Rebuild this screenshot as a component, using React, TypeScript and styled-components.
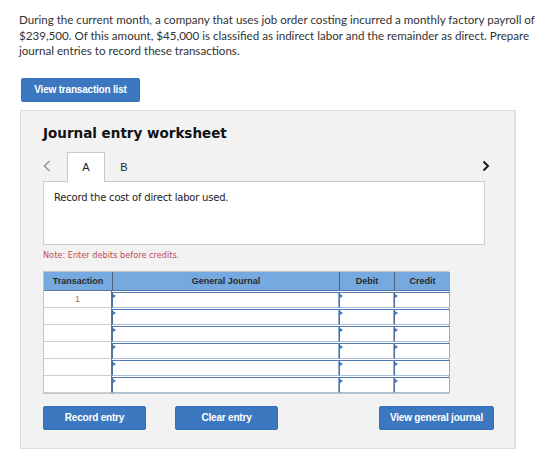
import React from "react";
import styled, { createGlobalStyle } from "styled-components";

const GlobalStyle = createGlobalStyle`
  body {
    margin: 0;
    background: #ffffff;
    font-family: "Lato", "Liberation Sans", sans-serif;
  }
`;

const Page = styled.div`
  width: 560px;
  height: 449px;
  padding: 12px 0 0 19px;
  box-sizing: border-box;
  overflow: hidden;
`;

const Intro = styled.p`
  margin: 0;
  font-size: 11.6px;
  line-height: 15.5px;
  color: #333;
  white-space: nowrap;
`;

const BlueButton = styled.button<{ $width: number }>`
  width: ${(p) => p.$width}px;
  height: 24px;
  border: 1px solid #3570b6;
  border-radius: 2px;
  background: #3c78c0;
  color: #fff;
  font-family: "Liberation Sans", Arial, sans-serif;
  font-weight: bold;
  font-size: 10px;
  letter-spacing: -0.2px;
  padding: 0;
  cursor: pointer;
`;

const TopButtonRow = styled.div`
  margin-top: 19px;
  padding-left: 2px;
  display: flex;
`;

const Panel = styled.div`
  margin: 8px 0 0 1px;
  width: 496px;
  height: 339px;
  box-sizing: border-box;
  background: #f2f2f2;
  border: 1px solid #dcdcdc;
  border-right-width: 2px;
  padding: 12px 29px 0 22px;
`;

const Title = styled.h2`
  margin: 0;
  font-family: "DejaVu Sans", Verdana, sans-serif;
  font-size: 13.5px;
  font-weight: bold;
  color: #111;
  line-height: 20px;
`;

const TabRow = styled.div`
  margin-top: 8px;
  display: flex;
  align-items: flex-end;
  height: 30px;
`;

const Chevron = styled.span<{ $dark?: boolean }>`
  width: 24px;
  display: flex;
  align-items: center;
  justify-content: ${(p) => (p.$dark ? "flex-end" : "flex-start")};
  height: 30px;
  color: ${(p) => (p.$dark ? "#1a1a1a" : "#999")};
  margin-left: ${(p) => (p.$dark ? "auto" : "0")};
  margin-right: ${(p) => (p.$dark ? "-5px" : "0")};
`;

const Tab = styled.div<{ $active?: boolean }>`
  width: 38px;
  height: 30px;
  box-sizing: border-box;
  display: flex;
  align-items: center;
  justify-content: center;
  font-family: "Liberation Sans", Arial, sans-serif;
  font-size: 11px;
  color: #222;
  background: ${(p) => (p.$active ? "#fff" : "transparent")};
  border: 1px solid ${(p) => (p.$active ? "#c8c8c8" : "transparent")};
  border-bottom: none;
  margin-bottom: -1px;
  position: relative;
  z-index: 1;
`;

const Prompt = styled.div`
  height: 64px;
  box-sizing: border-box;
  background: #fff;
  border: 1px solid #cccccc;
  padding: 10px 10px;
  font-family: "DejaVu Sans", Verdana, sans-serif;
  font-size: 10px;
  letter-spacing: -0.2px;
  color: #222;
`;

const Note = styled.div`
  margin-top: 5px;
  font-family: "DejaVu Sans", Verdana, sans-serif;
  font-size: 8.2px;
  color: #c04a55;
`;

const Table = styled.div`
  margin-top: 11px;
  width: 406px;
  display: grid;
  grid-template-columns: 68px 227px 55px 56px;
  grid-template-rows: 19px;
  grid-auto-rows: 17px;
  background: #fff;
  border: 1px solid #c4c4c4;
  box-sizing: border-box;
`;

const HeadCell = styled.div<{ $first?: boolean }>`
  background: #75a9e0;
  border-left: ${(p) => (p.$first ? "none" : "1px solid #4d5f78")};
  border-bottom: 1px solid #56779f;
  display: flex;
  align-items: center;
  justify-content: center;
  font-family: "Liberation Sans", Arial, sans-serif;
  font-weight: bold;
  font-size: 9px;
  color: #2b2b2b;
`;

const NumCell = styled.div`
  border-bottom: 1px solid #cfcfcf;
  border-right: 1px solid #707070;
  display: flex;
  align-items: center;
  justify-content: center;
  font-family: "Liberation Sans", Arial, sans-serif;
  font-size: 9px;
  color: #b0702a;
`;

const InputCell = styled.div`
  position: relative;
  margin-top: 1px;
  background: #fff;
  border: 1px solid #8fabd0;
  border-top-color: #4f79b0;
  border-left: 1px solid #4f6f98;
  border-bottom-color: #a9bedb;
  &::before {
    content: "";
    position: absolute;
    top: 1px;
    left: 0;
    border-top: 2px solid transparent;
    border-bottom: 2px solid transparent;
    border-left: 3px solid #3b7bd0;
  }
`;

const BottomRow = styled.div`
  margin-top: 12px;
  display: flex;
  gap: 29px;
  width: 451px;
`;

const Spacer = styled.div`
  flex: 1;
`;

const rows = ["1", "", "", "", "", ""];

export default function App() {
  return (
    <Page>
      <GlobalStyle />
      <Intro>
        During the current month, a company that uses job order costing incurred a monthly factory payroll of
        <br />
        $239,500. Of this amount, $45,000 is classified as indirect labor and the remainder as direct. Prepare
        <br />
        journal entries to record these transactions.
      </Intro>
      <TopButtonRow>
        <BlueButton $width={119}>View transaction list</BlueButton>
      </TopButtonRow>
      <Panel>
        <Title>Journal entry worksheet</Title>
        <TabRow>
          <Chevron>
            <svg width="8" height="12" viewBox="0 0 8 12">
              <path d="M6.5 1 L1.5 6 L6.5 11" fill="none" stroke="currentColor" strokeWidth="1.6" />
            </svg>
          </Chevron>
          <Tab $active>A</Tab>
          <Tab>B</Tab>
          <Chevron $dark>
            <svg width="8" height="12" viewBox="0 0 8 12">
              <path d="M1.5 1.5 L6 6 L1.5 10.5" fill="none" stroke="currentColor" strokeWidth="2" />
            </svg>
          </Chevron>
        </TabRow>
        <Prompt>Record the cost of direct labor used.</Prompt>
        <Note>Note: Enter debits before credits.</Note>
        <Table>
          <HeadCell $first>Transaction</HeadCell>
          <HeadCell>General Journal</HeadCell>
          <HeadCell>Debit</HeadCell>
          <HeadCell>Credit</HeadCell>
          {rows.map((r, i) => (
            <React.Fragment key={i}>
              <NumCell>{r}</NumCell>
              <InputCell />
              <InputCell />
              <InputCell />
            </React.Fragment>
          ))}
        </Table>
        <BottomRow>
          <BlueButton $width={103}>Record entry</BlueButton>
          <BlueButton $width={103}>Clear entry</BlueButton>
          <Spacer />
          <BlueButton $width={115}>View general journal</BlueButton>
        </BottomRow>
      </Panel>
    </Page>
  );
}
